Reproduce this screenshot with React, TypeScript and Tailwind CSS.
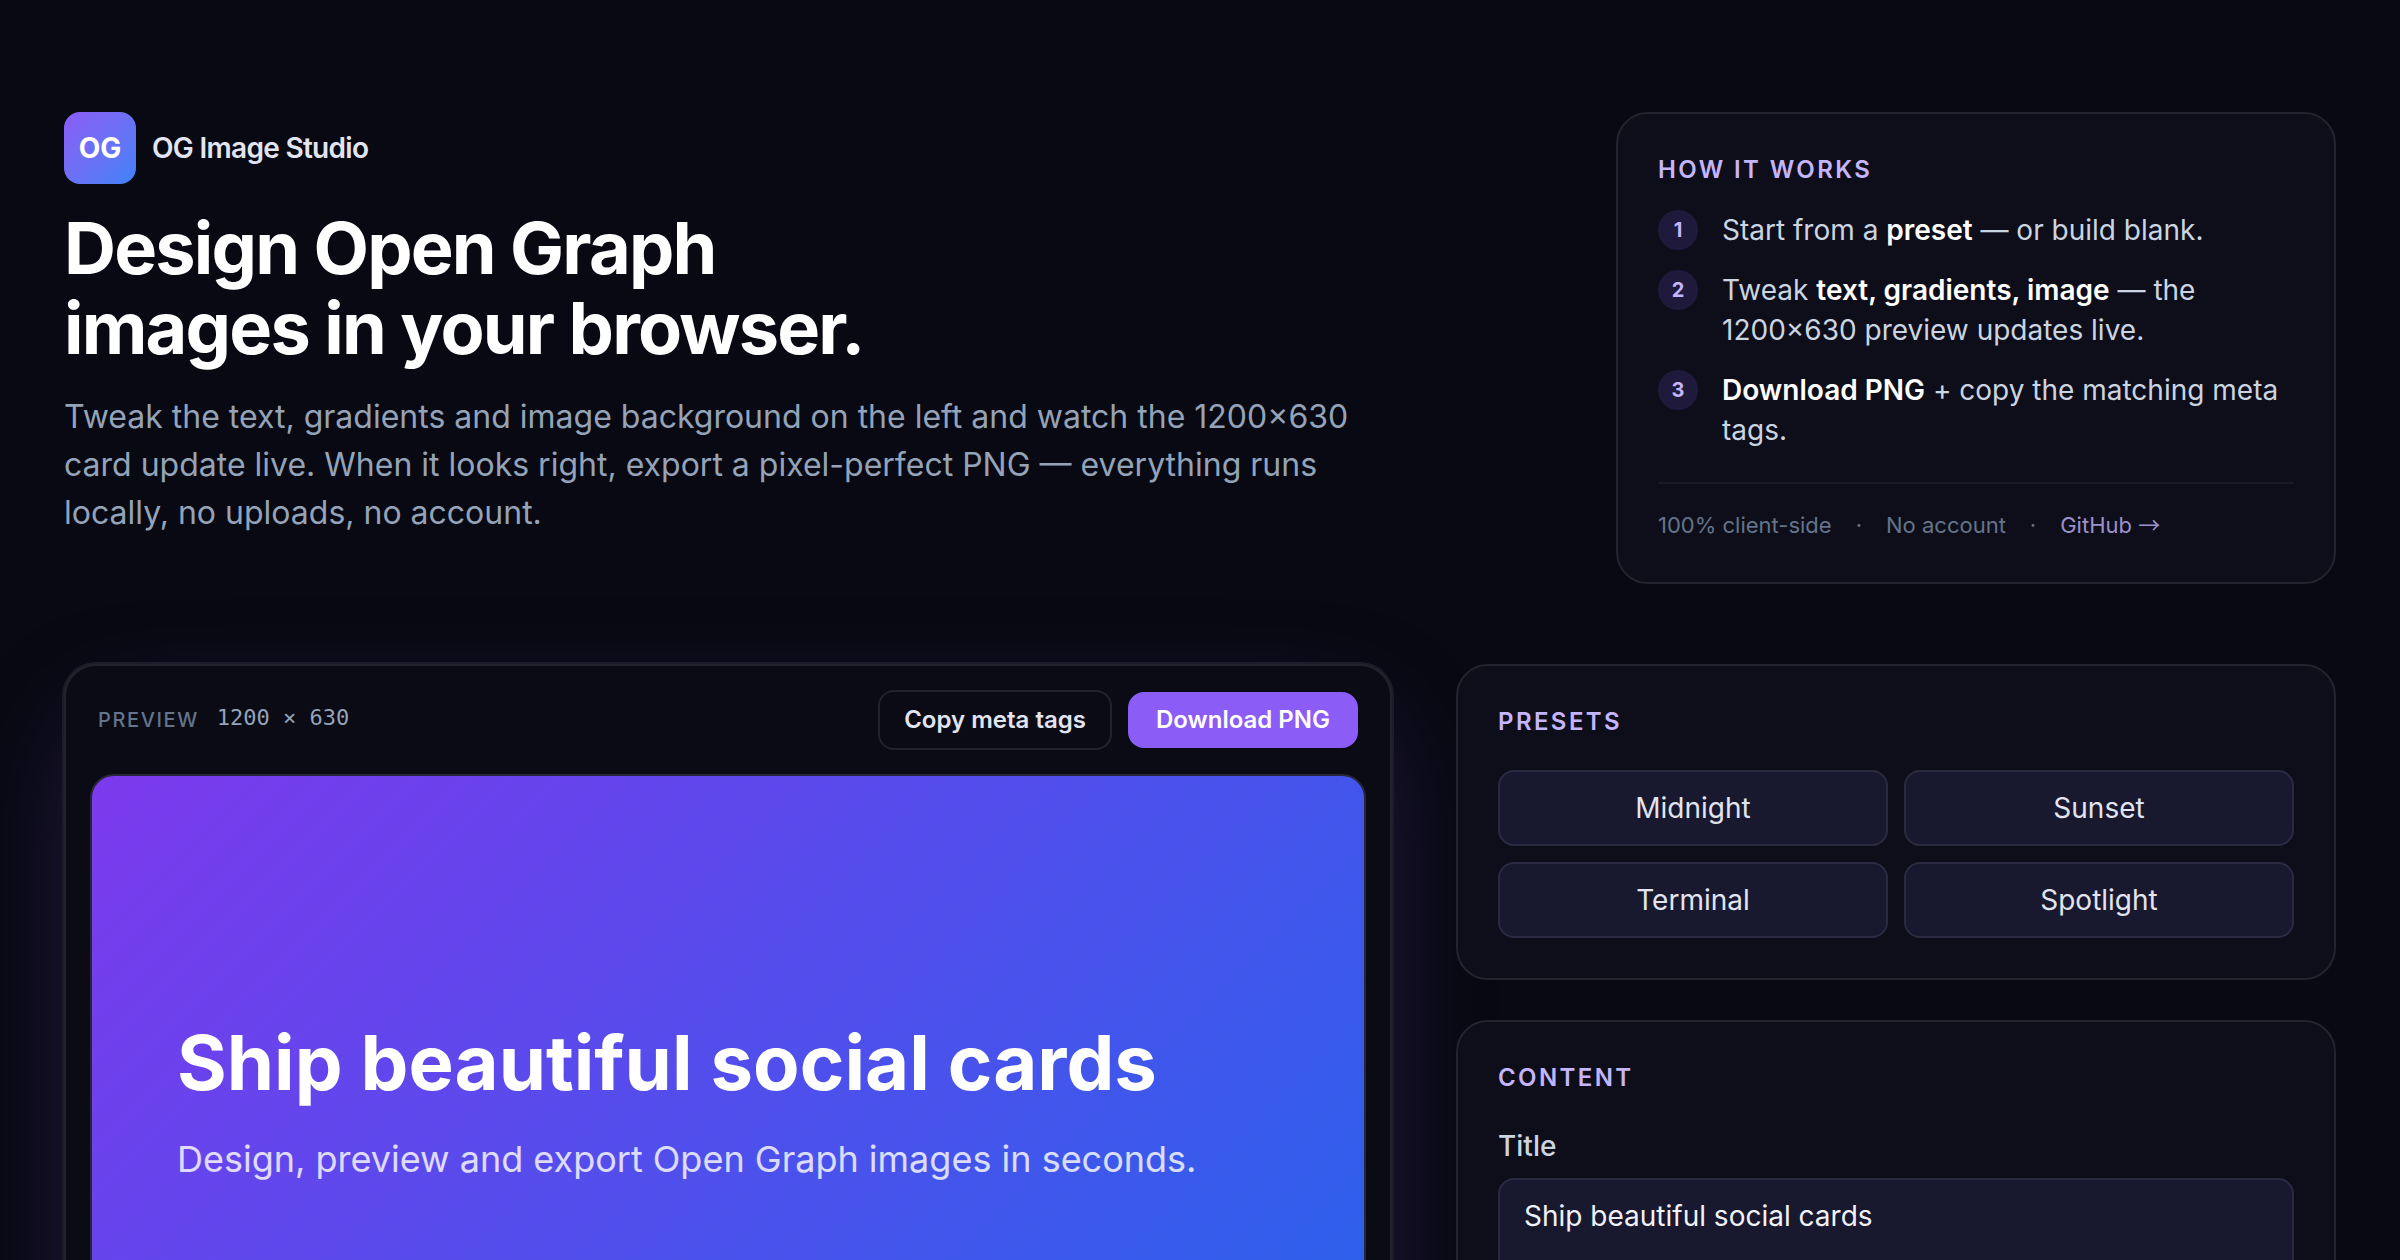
import { useState } from 'react'

const panel = 'rounded-[32px] border-2 border-[#23232e] bg-[#0e0e1a]'
const heading = 'text-2xl leading-8 font-semibold tracking-widest text-[#c4b5fd] uppercase'
const field = 'rounded-2xl border-2 border-[#2b2a41] bg-[#18182f] text-[28px] leading-10'

const presets = ['Midnight', 'Sunset', 'Terminal', 'Spotlight']

function Step({ n, children }: { n: number; children: React.ReactNode }) {
  return (
    <li className="flex gap-6">
      <span className="flex size-10 shrink-0 items-center justify-center rounded-full bg-[#1f193b] text-xl font-bold text-[#c4b5fd]">
        {n}
      </span>
      <p>{children}</p>
    </li>
  )
}

function Hero() {
  return (
    <div className="min-w-0">
      <div className="flex items-center gap-4">
        <div className="flex size-18 items-center justify-center rounded-2xl bg-linear-to-br from-[#8b5cf6] to-[#3b82f6] text-[28px] font-bold text-white">
          OG
        </div>
        <span className="text-[28px] font-semibold tracking-tight text-[#e2e4f0]">
          OG Image Studio
        </span>
      </div>
      <h1 className="mt-6 text-7xl leading-20 font-bold tracking-tight text-white">
        Design Open Graph
        <br />
        images in your browser.
      </h1>
      <p className="mt-[25px] max-w-[1344px] text-[32px] leading-12 text-[#94a3b8]">
        Tweak the text, gradients and image background on the left and watch the 1200×630 card
        update live. When it looks right, export a pixel-perfect PNG — everything runs locally, no
        uploads, no account.
      </p>
    </div>
  )
}

function HowItWorks() {
  return (
    <aside className={`${panel} w-[720px] shrink-0 p-10`}>
      <h2 className={heading}>How it works</h2>
      <ol className="mt-6 flex flex-col gap-5 text-[28px] leading-10 text-[#cbd5e1]">
        <Step n={1}>
          Start from a <strong className="font-semibold text-white">preset</strong> — or build
          blank.
        </Step>
        <Step n={2}>
          Tweak <strong className="font-semibold text-white">text, gradients, image</strong> — the
          1200×630 preview updates live.
        </Step>
        <Step n={3}>
          <strong className="font-semibold text-white">Download PNG</strong> + copy the matching
          meta tags.
        </Step>
      </ol>
      <div className="mt-8 flex gap-6 border-t-2 border-[#1a1a26] pt-6 text-[22px] leading-[34px] text-[#64748b]">
        <span>100% client-side</span>
        <span>·</span>
        <span>No account</span>
        <span>·</span>
        <a href="#github" className="text-[#c4b5fd]/80">
          GitHub{' '}
          <span className="font-['Noto_Sans_CJK_SC',sans-serif] leading-none">→</span>
        </a>
      </div>
    </aside>
  )
}

function Preview({ title }: { title: string }) {
  return (
    <section className="rounded-[32px] border-2 border-[#23232e] bg-[#0a0b15] p-6 shadow-[0_0_0_2px_#1d1c28,0_40px_120px_-20px_rgba(139,92,246,0.25)]">
      <div className="flex items-center justify-between px-2 pb-6">
        <div className="flex items-center gap-4.5">
          <span className="text-xl font-medium tracking-[0.08em] text-[#64748b] uppercase">
            Preview
          </span>
          <span className="pb-1 font-['DejaVu_Sans_Mono',monospace] text-[22px] leading-8 text-[#94a3b8]">
            1200 × 630
          </span>
        </div>
        <div className="flex items-center gap-4">
          <button
            type="button"
            className="rounded-2xl border-2 border-[#23232e] px-6 py-2.5 text-2xl leading-9 font-semibold text-[#e2e4f0]"
          >
            Copy meta tags
          </button>
          <button
            type="button"
            className="rounded-2xl bg-[#8b5cf6] px-7 py-2.5 text-2xl leading-9 font-semibold text-white"
          >
            Download PNG
          </button>
        </div>
      </div>
      <div className="flex aspect-[1200/630] flex-col justify-center gap-[30px] rounded-3xl border-2 border-[#272538] bg-[linear-gradient(135deg,#7c3aed,#2563eb)] bg-origin-border px-[85px] pb-3.5">
        <p className="text-[76px] leading-[84px] font-bold text-white">{title}</p>
        <p className="text-4xl leading-[50px] text-white/80">
          Design, preview and export Open Graph images in seconds.
        </p>
      </div>
    </section>
  )
}

export default function App() {
  const [title, setTitle] = useState('Ship beautiful social cards')

  return (
    <div className="min-h-screen bg-[#080912] px-16 py-28 font-['Inter',sans-serif]">
      <header className="flex items-start justify-between gap-16">
        <Hero />
        <HowItWorks />
      </header>

      <main className="mt-20 grid grid-cols-[minmax(0,1fr)_880px] items-start gap-16">
        <Preview title={title} />

        <div className="relative flex flex-col gap-10">
          <section className={`${panel} p-10`}>
            <h2 className={heading}>Presets</h2>
            <div className="mt-8 grid grid-cols-2 gap-4">
              {presets.map((name) => (
                <button key={name} type="button" className={`${field} py-4 text-[#e2e4f0]`}>
                  {name}
                </button>
              ))}
            </div>
          </section>

          <section className={`${panel} p-10`}>
            <h2 className={heading}>Content</h2>
            <label
              htmlFor="title"
              className="mt-8 block text-[28px] leading-10 font-medium text-[#cbd5e1]"
            >
              Title
            </label>
            <textarea
              id="title"
              rows={2}
              value={title}
              onChange={(e) => setTitle(e.target.value)}
              className={`${field} mt-3 block w-full resize-none px-6 py-4 text-[#f1f2f9] outline-none`}
            />
          </section>
        </div>
      </main>
    </div>
  )
}
